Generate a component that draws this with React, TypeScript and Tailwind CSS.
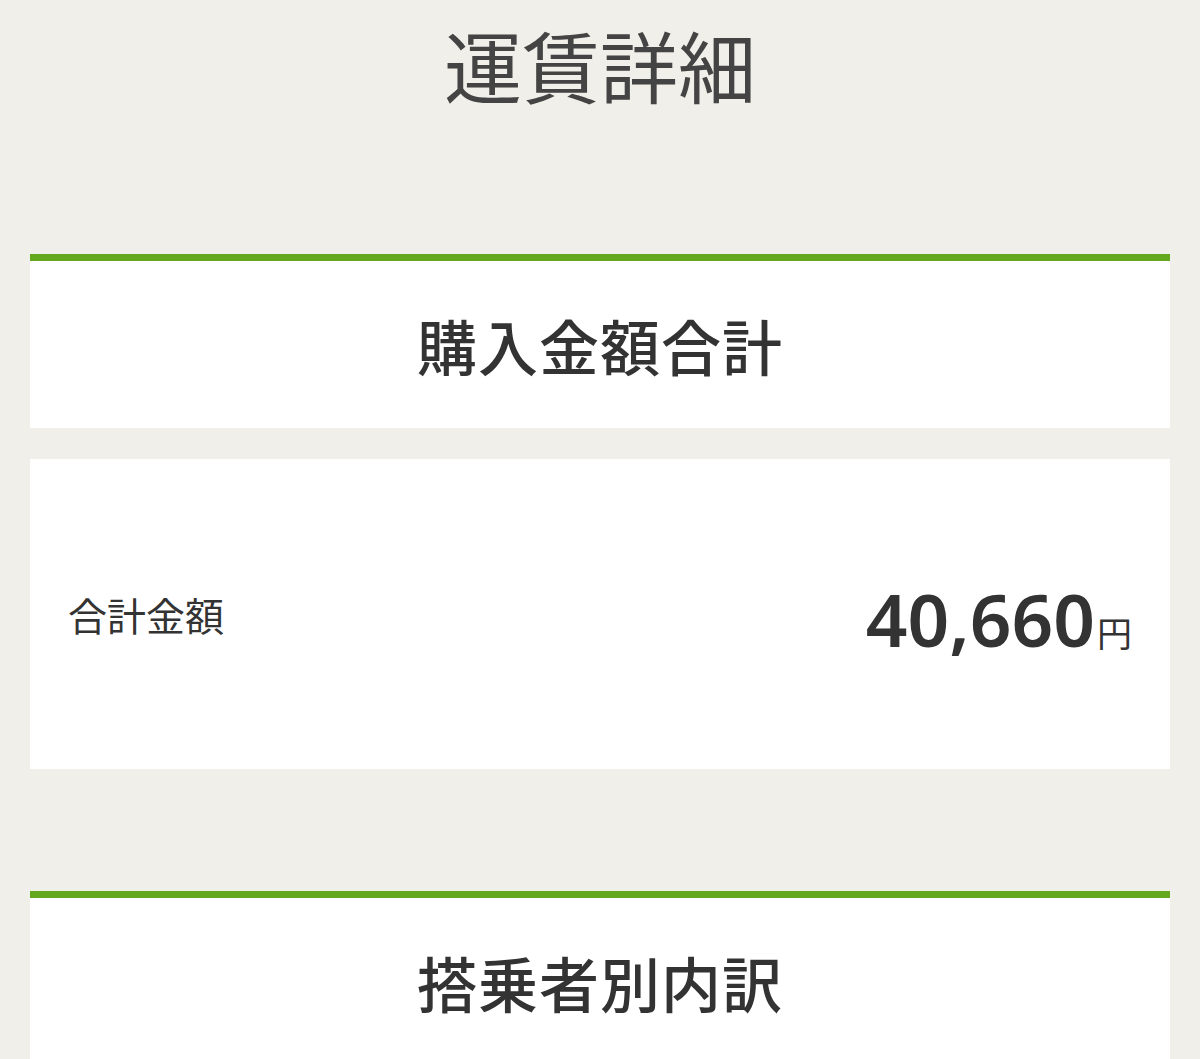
import React from "react";

const jp = { fontFamily: '"Noto Sans CJK JP", "Noto Sans", sans-serif' };

const SectionHeader = ({ title }: { title: string }) => (
  <div className="bg-white border-t-[7px] border-[#64a81e] h-[174px] flex items-center justify-center">
    <h2 className="text-[60px] font-medium text-[#333333] tracking-[1px] leading-none">{title}</h2>
  </div>
);

const App = () => {
  return (
    <div className="min-h-[1059px] bg-[#f0efe9] px-[30px] overflow-hidden" style={jp}>
      <h1 className="h-[130px] flex items-center justify-center text-[78px] text-[#444444] font-normal leading-none pb-[2px]">
        運賃詳細
      </h1>

      <div className="mt-[124px]">
        <SectionHeader title="購入金額合計" />
        <div className="bg-white mt-[31px] h-[310px] flex items-center justify-between pl-[38px] pr-[38px]">
          <p className="text-[39px] text-[#333333] leading-none">合計金額</p>
          <p className="flex items-baseline text-[#333333] leading-none pt-[8px]">
            <span className="text-[73px] font-semibold" style={{ fontFamily: '"Noto Sans", sans-serif' }}>
              40,660
            </span>
            <span className="text-[35px] ml-[2px]">円</span>
          </p>
        </div>
      </div>

      <div className="mt-[122px]">
        <SectionHeader title="搭乗者別内訳" />
      </div>
    </div>
  );
};

export default App;
